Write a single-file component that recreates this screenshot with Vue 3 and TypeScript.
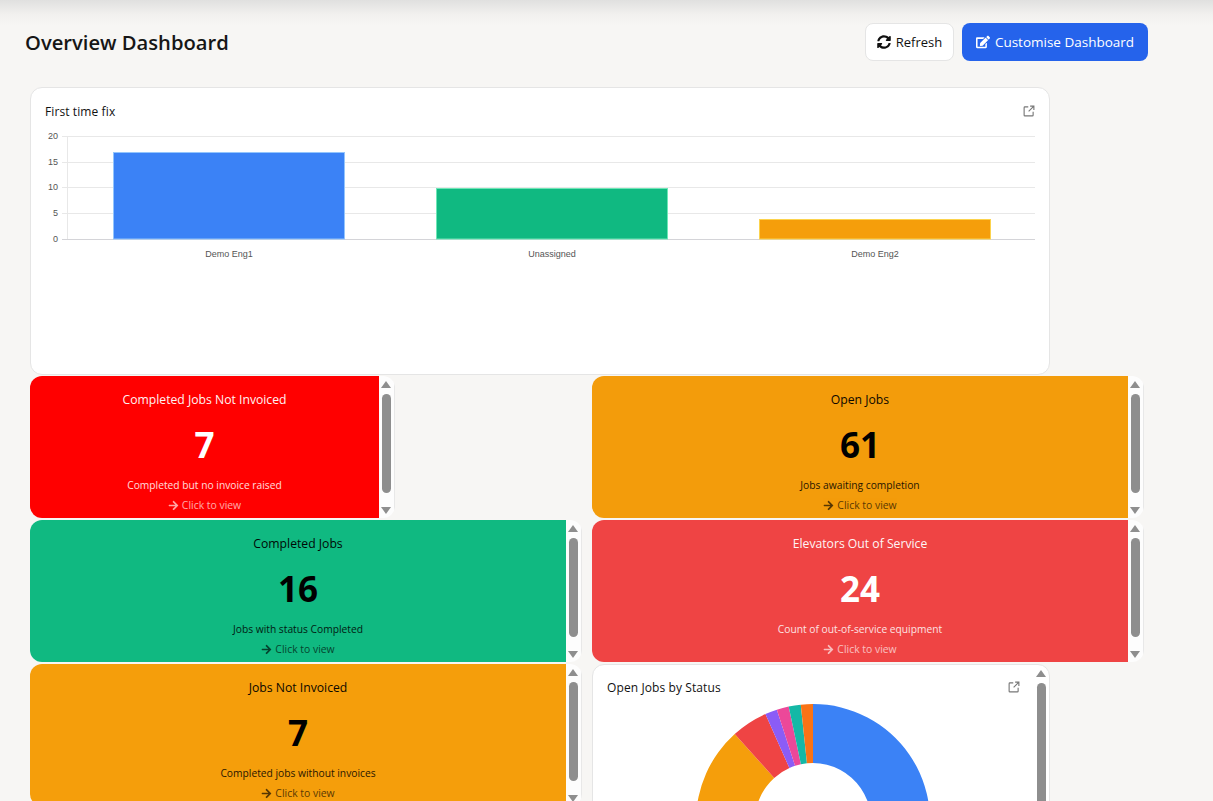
<template>
  <div class="page">
    <header class="top">
      <h1>Overview Dashboard</h1>
      <div class="actions">
        <button class="btn btn-light">
          <svg class="ico" viewBox="0 0 512 512"><path :d="syncPath" /></svg>
          Refresh
        </button>
        <button class="btn btn-primary">
          <svg class="ico" viewBox="0 0 576 512"><path :d="editPath" /></svg>
          Customise Dashboard
        </button>
      </div>
    </header>

    <main class="grid">
      <section class="card chart-card">
        <div class="card-head">
          <span class="card-title">First time fix</span>
          <svg class="ext" viewBox="0 0 16 16"><path :d="extPath" /></svg>
        </div>
        <svg class="bars" viewBox="0 0 990 140" width="990" height="140">
          <line v-for="t in ticks" :key="t.label" x1="17" x2="990" :y1="t.y" :y2="t.y" :stroke="t.label === '0' ? '#d4d4d8' : '#e8e8e8'" />
          <line x1="22.5" x2="22.5" y1="8" y2="111" stroke="#e8e8e8" />
          <text v-for="t in ticks" :key="'l' + t.label" x="13" :y="t.y + 2" text-anchor="end" class="axis">{{ t.label }}</text>
          <g v-for="b in bars" :key="b.name">
            <rect :x="b.x" :y="b.y" :width="b.w" :height="111 - b.y" :fill="b.color" :stroke="b.edge" />
            <text :x="b.x + b.w / 2" y="129" text-anchor="middle" class="axis">{{ b.name }}</text>
          </g>
        </svg>
      </section>

      <article v-for="tile in tiles" :key="tile.title" class="tile" :class="{ narrow: tile.narrow }">
        <div class="tile-body" :class="tile.tone">
          <div class="tile-title">{{ tile.title }}</div>
          <div class="tile-num">{{ tile.value }}</div>
          <div class="tile-sub">{{ tile.sub }}</div>
          <div class="tile-link">
            <svg class="arrow" viewBox="0 0 448 512"><path :d="arrowPath" /></svg>
            Click to view
          </div>
        </div>
        <div class="rail">
          <i class="up"></i>
          <b class="thumb"></b>
          <i class="down"></i>
        </div>
      </article>

      <article class="tile donut-card">
        <div class="donut-body">
          <div class="card-head">
            <span class="card-title">Open Jobs by Status</span>
            <svg class="ext" viewBox="0 0 16 16"><path :d="extPath" /></svg>
          </div>
          <svg class="donut" viewBox="-117 -117 234 234" width="234" height="234">
            <path v-for="s in slices" :key="s.color" :d="s.d" :fill="s.color" />
          </svg>
        </div>
        <div class="rail">
          <i class="up"></i>
          <b class="thumb thumb-long"></b>
        </div>
      </article>
    </main>
  </div>
</template>

<script setup lang="ts">
import { computed } from 'vue';

const syncPath = 'M370.72 133.28C339.458 104.008 298.888 87.962 255.848 88c-77.458.068-144.328 53.178-162.791 126.85-1.344 5.363-6.122 9.15-11.651 9.15H24.103c-7.498 0-13.194-6.807-11.807-14.176C33.933 94.924 134.813 8 256 8c66.448 0 126.791 26.136 171.315 68.685L463.03 40.97C478.149 25.851 504 36.559 504 57.941V192c0 13.255-10.745 24-24 24H345.941c-21.382 0-32.09-25.851-16.971-40.971l41.75-41.749zM32 296h134.059c21.382 0 32.09 25.851 16.971 40.971l-41.75 41.75c31.262 29.273 71.835 45.319 114.876 45.28 77.418-.07 144.315-53.144 162.787-126.849 1.344-5.363 6.122-9.15 11.651-9.15h57.304c7.498 0 13.194 6.807 11.807 14.176C478.067 417.076 377.187 504 256 504c-66.448 0-126.791-26.136-171.315-68.685L48.97 471.03C33.851 486.149 8 475.441 8 454.059V320c0-13.255 10.745-24 24-24z';
const editPath = 'M402.6 83.2l90.2 90.2c3.8 3.8 3.8 10 0 13.8L274.4 405.6l-92.8 10.3c-12.4 1.4-22.9-9.1-21.5-21.5l10.3-92.8L388.8 83.2c3.8-3.8 10-3.8 13.8 0zm162-22.9l-48.8-48.8c-15.2-15.2-39.9-15.2-55.2 0l-35.4 35.4c-3.8 3.8-3.8 10 0 13.8l90.2 90.2c3.8 3.8 10 3.8 13.8 0l35.4-35.4c15.2-15.3 15.2-40 0-55.2zM384 346.2V448H64V128h229.8c3.2 0 6.2-1.3 8.5-3.5l40-40c7.6-7.6 2.2-20.5-8.5-20.5H48C21.5 64 0 85.5 0 112v352c0 26.5 21.5 48 48 48h352c26.5 0 48-21.5 48-48V306.2c0-10.7-12.9-16-20.5-8.5l-40 40c-2.2 2.3-3.5 5.3-3.5 8.5z';
const arrowPath = 'M190.5 66.9l22.2-22.2c9.4-9.4 24.6-9.4 33.9 0L441 239c9.4 9.4 9.4 24.6 0 33.9L246.6 467.3c-9.4 9.4-24.6 9.4-33.9 0l-22.2-22.2c-9.5-9.5-9.3-25 .4-34.3L311.4 296H24c-13.3 0-24-10.7-24-24v-32c0-13.3 10.7-24 24-24h287.4L190.9 101.2c-9.8-9.3-10-24.8-.4-34.3z';
const extPath = 'M7 2.5H2.5a1 1 0 0 0-1 1v10a1 1 0 0 0 1 1h10a1 1 0 0 0 1-1V9M9.5 1.5h5v5M14.5 1.5 7.5 8.5';

const ticks = [
  { label: '20', y: 8.5 },
  { label: '15', y: 34.5 },
  { label: '10', y: 59.5 },
  { label: '5', y: 85.5 },
  { label: '0', y: 111.5 }
];

const bars = [
  { name: 'Demo Eng1', x: 68.5, y: 24.5, w: 231, color: '#3b82f6', edge: '#93c5fd' },
  { name: 'Unassigned', x: 391.5, y: 60.5, w: 231, color: '#10b981', edge: '#6ee7b7' },
  { name: 'Demo Eng2', x: 714.5, y: 91.5, w: 231, color: '#f59e0b', edge: '#fcd34d' }
];

interface Tile {
  title: string
  value: number
  sub: string
  tone: string
  narrow?: boolean
}

const tiles: Tile[] = [
  { title: 'Completed Jobs Not Invoiced', value: 7, sub: 'Completed but no invoice raised', tone: 'red', narrow: true },
  { title: 'Open Jobs', value: 61, sub: 'Jobs awaiting completion', tone: 'orange' },
  { title: 'Completed Jobs', value: 16, sub: 'Jobs with status Completed', tone: 'green' },
  { title: 'Elevators Out of Service', value: 24, sub: 'Count of out-of-service equipment', tone: 'rose' },
  { title: 'Jobs Not Invoiced', value: 7, sub: 'Completed jobs without invoices', tone: 'amber' }
];

const statusData = [
  { value: 37, color: '#3b82f6' },
  { value: 16, color: '#f59e0b' },
  { value: 3, color: '#ef4444' },
  { value: 1, color: '#8b5cf6' },
  { value: 1, color: '#ec4899' },
  { value: 1, color: '#14b8a6' },
  { value: 1, color: '#f97316' }
];

// donut wedges, clockwise from 12 o'clock
const slices = computed(() => {
  const total = statusData.reduce((sum, s) => sum + s.value, 0);
  const R = 117;
  const r = 58;
  let angle = 0;
  const pt = (rad: number, a: number) => `${(rad * Math.sin(a)).toFixed(2)} ${(-rad * Math.cos(a)).toFixed(2)}`;
  return statusData.map((s) => {
    const start = angle;
    angle += (s.value / total) * Math.PI * 2;
    const large = angle - start > Math.PI ? 1 : 0;
    return {
      color: s.color,
      d: `M${pt(R, start)}A${R} ${R} 0 ${large} 1 ${pt(R, angle)}L${pt(r, angle)}A${r} ${r} 0 ${large} 0 ${pt(r, start)}Z`
    };
  });
});
</script>

<style scoped>
.page {
  height: 100vh;
  overflow: hidden;
  box-sizing: border-box;
  padding: 23px 0 0 30px;
  background: linear-gradient(#e0e0df 0, #f1f0ee 14px, #f7f6f4 26px);
  font-family: "Open Sans", "Noto Sans", sans-serif;
  color: #111;
}

.top {
  display: flex;
  align-items: center;
  justify-content: space-between;
  width: 1123px;
  height: 38px;
  margin-left: -5px;
}

h1 {
  margin: 0;
  font-size: 20.2px;
  line-height: 36px;
  font-weight: 600;
  color: #161616;
}

.actions {
  display: flex;
  gap: 8px;
}

.btn {
  display: flex;
  align-items: center;
  justify-content: center;
  gap: 5px;
  height: 38px;
  box-sizing: border-box;
  border-radius: 8px;
  font: 400 13.5px "Open Sans", sans-serif;
}

.btn-light {
  width: 89px;
  background: #fff;
  border: 1px solid #e5e5e5;
  color: #111;
  font-size: 13px;
}

.btn-primary {
  width: 186px;
  background: #2563eb;
  border: 0;
  color: #fff;
}

.ico {
  width: 14px;
  height: 14px;
  fill: currentColor;
}

.grid {
  display: grid;
  grid-template-columns: 552px 552px;
  grid-template-rows: 287px;
  grid-auto-rows: 142px;
  column-gap: 10px;
  row-gap: 2px;
  margin-top: 26px;
}

.card {
  box-sizing: border-box;
  background: #fff;
  border: 1px solid #e5e5e5;
  border-radius: 12px;
}

.chart-card {
  grid-column: 1 / -1;
  width: 1020px;
  height: 288px;
  padding: 14px 14px 0;
}

.card-head {
  display: flex;
  align-items: center;
  justify-content: space-between;
  height: 18px;
}

.card-title {
  font-size: 12px;
  font-weight: 500;
  letter-spacing: 0.1px;
  color: #111;
}

.ext {
  width: 12px;
  height: 12px;
  fill: none;
  stroke: #777;
  stroke-width: 1.5;
}

.bars {
  display: block;
  margin-top: 8px;
}

.axis {
  font: 9px "Liberation Sans", sans-serif;
  fill: #555;
}

.tile {
  display: flex;
  min-width: 0;
  background: #fdfdfd;
  border-radius: 12px;
  overflow: hidden;
}

.narrow {
  width: 365px;
}

.tile-body {
  flex: 1;
  display: flex;
  flex-direction: column;
  align-items: center;
  padding-top: 15px;
  text-align: center;
  color: #000;
}

.tile-title {
  font-size: 12.2px;
  line-height: 18px;
  opacity: 0.95;
}

.tile-num {
  margin-top: 14px;
  font-size: 35px;
  font-weight: 700;
  line-height: 44px;
}

.tile-sub {
  margin-top: 10px;
  font-size: 10.25px;
  line-height: 16px;
  opacity: 0.85;
}

.tile-link {
  display: flex;
  align-items: center;
  gap: 3px;
  margin-top: 4px;
  font-size: 10.4px;
  line-height: 16px;
  opacity: 0.65;
}

.arrow {
  width: 11px;
  height: 11px;
  fill: currentColor;
}

.red {
  background: #ff0000;
  color: #fff;
}

.rose {
  background: #ef4444;
  color: #fff;
}

.green {
  background: #10b981;
}

.amber {
  background: #f59e0b;
}

.orange {
  background: #f39c0b;
}

.rail {
  display: flex;
  flex-direction: column;
  align-items: center;
  flex: none;
  box-sizing: border-box;
  width: 16px;
  padding: 5px 1px 4px 0;
  border-right: 1px solid #e8e8e8;
}

.thumb {
  width: 9px;
  height: 99px;
  margin-top: 6px;
  border-radius: 5px;
  background: #8e8e8e;
}

.thumb-long {
  height: 200px;
}

.up,
.down {
  width: 0;
  height: 0;
  border-left: 5px solid transparent;
  border-right: 5px solid transparent;
}

.up {
  border-bottom: 7px solid #8e8e8e;
}

.down {
  margin-top: auto;
  border-top: 7px solid #8e8e8e;
}

.donut-card {
  width: 458px;
  height: 300px;
  background: #fff;
  border: 1px solid #e5e5e5;
  box-sizing: border-box;
}

.donut-card .rail {
  padding-right: 0;
  border-right: 0;
}

.donut-body {
  flex: 1;
  padding: 13px 13px 0 14px;
}

.donut {
  display: block;
  margin: 8px 0 0 89px;
}
</style>
